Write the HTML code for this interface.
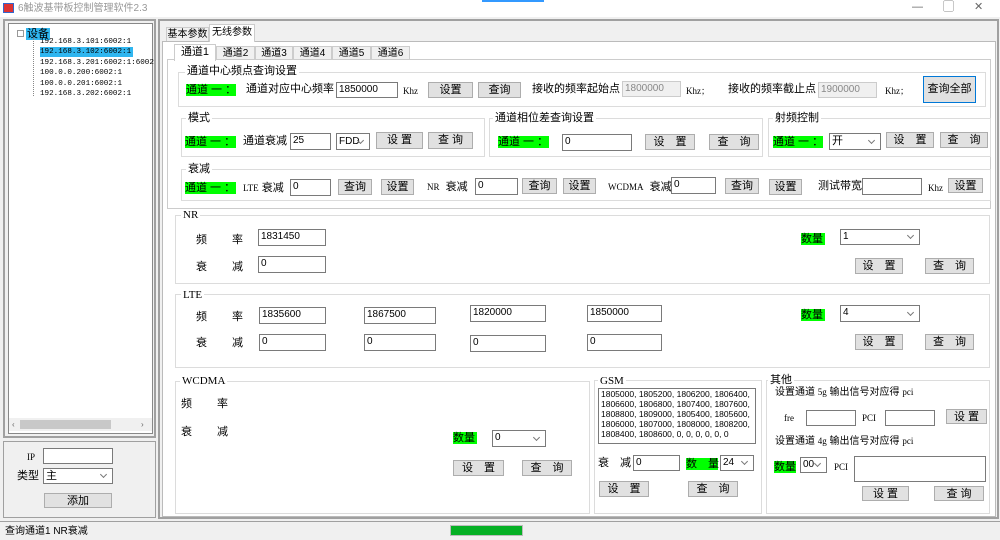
<!DOCTYPE html>
<html><head><meta charset="utf-8"><style>
*{box-sizing:border-box;margin:0;padding:0}
body{width:1000px;height:540px;background:#f0f0f0;position:relative;overflow:hidden;font-family:"Liberation Sans","Noto Sans CJK SC",sans-serif;font-size:11px;color:#000}
.a{position:absolute;white-space:nowrap}
.t{position:absolute;white-space:nowrap;font-size:11px;line-height:13px}
.s{font-family:"Liberation Serif","Noto Serif CJK SC",serif;font-size:9px}
.m{font-family:"Liberation Mono",monospace;font-size:7.6px}
.g{position:absolute;background:#00ff00;height:12px;line-height:12px;font-size:11px;white-space:nowrap}
.b{position:absolute;background:#e1e1e1;border:1px solid #adadad;text-align:center;font-size:11px;line-height:14px;white-space:nowrap}
.i{position:absolute;background:#fff;border:1px solid #7a7a7a;font-size:10px;line-height:14px;padding-left:2px;white-space:nowrap;font-family:"Liberation Sans Narrow","Liberation Sans",sans-serif}
.d{background:#f0f0f0;border-color:#ccc;color:#888}
.sel:after{content:"";position:absolute;right:6px;top:50%;margin-top:-4px;width:4px;height:4px;border-right:1px solid #777;border-bottom:1px solid #777;transform:rotate(45deg)}
.gb{position:absolute;border:1px solid #dcdcdc}
.gl{position:absolute;background:#fff;padding:0 2px;font-size:11px;line-height:12px;white-space:nowrap}
</style></head><body>
<div class="a" style="left:0;top:0;width:1000px;height:17px;background:#fff"></div>
<div class="a" style="left:3px;top:3px;width:11px;height:10px;background:#d33;border:1px solid #36c"></div>
<div class="t" style="left:18px;top:2px;color:#999;font-size:10px">6触波基带板控制管理软件2.3</div>
<div class="a" style="left:482px;top:0;width:62px;height:2px;background:#39f"></div>
<div class="t" style="left:912px;top:1px;color:#666">—</div>
<div class="t" style="left:943px;top:1px;color:#666">▢</div>
<div class="t" style="left:974px;top:1px;color:#666">✕</div>
<div class="a" style="left:3px;top:19px;width:153px;height:419px;border:2px solid #a0a0a0"></div>
<div class="a" style="left:8px;top:23px;width:145px;height:411px;background:#fff;border:1px solid #888"></div>
<div class="a" style="left:17px;top:30px;width:7px;height:7px;border:1px solid #999"></div>
<div class="g" style="left:26px;top:28px;background:#2fb6f0;padding:0 1px">设备</div>
<div class="a" style="left:33px;top:38px;width:1px;height:58px;border-left:1px dotted #888"></div>
<div class="a m" style="left:40px;top:37px;line-height:10px">192.168.3.101:6002:1</div>
<div class="a m" style="left:40px;top:47px;line-height:10px;background:#2fb6f0;padding-right:2px">192.168.3.102:6002:1</div>
<div class="a m" style="left:40px;top:58px;line-height:10px">192.168.3.201:6002:1:6002</div>
<div class="a m" style="left:40px;top:68px;line-height:10px">100.0.0.200:6002:1</div>
<div class="a m" style="left:40px;top:79px;line-height:10px">100.0.0.201:6002:1</div>
<div class="a m" style="left:40px;top:89px;line-height:10px">192.168.3.202:6002:1</div>
<div class="a" style="left:9px;top:418px;width:143px;height:13px;background:#f0f0f0"></div>
<div class="a" style="left:20px;top:420px;width:91px;height:9px;background:#c8c8c8"></div>
<div class="t" style="left:12px;top:418px;font-size:8px;color:#666">‹</div>
<div class="t" style="left:141px;top:418px;font-size:8px;color:#666">›</div>
<div class="a" style="left:3px;top:441px;width:153px;height:77px;border:1px solid #a0a0a0"></div>
<div class="t s" style="left:27px;top:451px">IP</div>
<div class="i" style="left:43px;top:448px;width:70px;height:16px"></div>
<div class="t" style="left:17px;top:470px">类型</div>
<div class="i sel" style="left:43px;top:468px;width:70px;height:16px;font-size:11px">主</div>
<div class="b" style="left:44px;top:493px;width:68px;height:15px">添加</div>
<div class="a" style="left:158px;top:19px;width:841px;height:500px;border:2px solid #a0a0a0"></div>
<div class="a" style="left:162px;top:41px;width:834px;height:476px;background:#fff;border:1px solid #bbb"></div>
<div class="a" style="left:166px;top:27px;width:43px;height:14px;border:1px solid #ccc;border-bottom:none;font-size:10px;text-align:center;line-height:13px">基本参数</div>
<div class="a" style="left:209px;top:24px;width:46px;height:18px;background:#fff;border:1px solid #ccc;border-bottom:none;font-size:10px;text-align:center;line-height:16px">无线参数</div>
<div class="a" style="left:167px;top:59px;width:824px;height:150px;border:1px solid #ccc"></div>
<div class="a" style="left:216px;top:46px;width:39px;height:14px;border:1px solid #ccc;background:#f0f0f0;font-size:10px;text-align:center;line-height:13px">通道2</div>
<div class="a" style="left:255px;top:46px;width:38px;height:14px;border:1px solid #ccc;background:#f0f0f0;font-size:10px;text-align:center;line-height:13px">通道3</div>
<div class="a" style="left:293px;top:46px;width:39px;height:14px;border:1px solid #ccc;background:#f0f0f0;font-size:10px;text-align:center;line-height:13px">通道4</div>
<div class="a" style="left:332px;top:46px;width:39px;height:14px;border:1px solid #ccc;background:#f0f0f0;font-size:10px;text-align:center;line-height:13px">通道5</div>
<div class="a" style="left:371px;top:46px;width:39px;height:14px;border:1px solid #ccc;background:#f0f0f0;font-size:10px;text-align:center;line-height:13px">通道6</div>
<div class="a" style="left:174px;top:44px;width:42px;height:17px;border:1px solid #ccc;border-bottom:none;background:#fff;font-size:11px;text-align:center;line-height:15px">通道1</div>
<div class="gb" style="left:178px;top:72px;width:808px;height:35px"></div>
<div class="gl" style="left:185px;top:65px">通道中心频点查询设置</div>
<div class="g" style="left:186px;top:84px;width:50px">通道 一 ：</div>
<div class="t" style="left:246px;top:83px">通道对应中心频率</div>
<div class="i" style="left:336px;top:82px;width:62px;height:16px">1850000</div>
<div class="t s" style="left:403px;top:85px">Khz</div>
<div class="b" style="left:428px;top:82px;width:45px;height:16px">设置</div>
<div class="b" style="left:478px;top:82px;width:43px;height:16px">查询</div>
<div class="t" style="left:532px;top:83px">接收的频率起始点</div>
<div class="i d" style="left:622px;top:81px;width:59px;height:16px">1800000</div>
<div class="t s" style="left:686px;top:85px">Khz；</div>
<div class="t" style="left:728px;top:83px">接收的频率截止点</div>
<div class="i d" style="left:818px;top:82px;width:59px;height:16px">1900000</div>
<div class="t s" style="left:885px;top:85px">Khz；</div>
<div class="b" style="left:923px;top:76px;width:53px;height:27px;border:1px solid #0078d7;line-height:25px">查询全部</div>
<div class="gb" style="left:181px;top:118px;width:304px;height:39px"></div>
<div class="gl" style="left:186px;top:112px">模式</div>
<div class="g" style="left:185px;top:136px;width:51px">通道 一 ：</div>
<div class="t" style="left:243px;top:135px">通道衰减</div>
<div class="i" style="left:290px;top:133px;width:41px;height:17px">25</div>
<div class="i sel s" style="left:336px;top:133px;width:34px;height:17px;line-height:15px">FDD</div>
<div class="b" style="left:376px;top:132px;width:47px;height:17px">设 置</div>
<div class="b" style="left:428px;top:132px;width:45px;height:17px">查 询</div>
<div class="gb" style="left:489px;top:118px;width:274px;height:39px"></div>
<div class="gl" style="left:493px;top:112px">通道相位差查询设置</div>
<div class="g" style="left:498px;top:136px;width:51px">通道 一 ：</div>
<div class="i" style="left:562px;top:134px;width:70px;height:17px">0</div>
<div class="b" style="left:645px;top:134px;width:50px;height:16px">设　置</div>
<div class="b" style="left:709px;top:134px;width:50px;height:16px">查　询</div>
<div class="gb" style="left:768px;top:118px;width:223px;height:39px"></div>
<div class="gl" style="left:773px;top:112px">射频控制</div>
<div class="g" style="left:773px;top:136px;width:50px">通道 一 ：</div>
<div class="i sel" style="left:829px;top:133px;width:52px;height:17px;font-size:11px">开</div>
<div class="b" style="left:886px;top:132px;width:48px;height:16px">设　置</div>
<div class="b" style="left:940px;top:132px;width:48px;height:16px">查　询</div>
<div class="gb" style="left:181px;top:169px;width:810px;height:32px"></div>
<div class="gl" style="left:186px;top:163px">衰减</div>
<div class="g" style="left:185px;top:182px;width:51px">通道 一 ：</div>
<div class="t" style="left:243px;top:182px"><span class="s">LTE</span> 衰减</div>
<div class="i" style="left:290px;top:179px;width:41px;height:17px">0</div>
<div class="b" style="left:338px;top:179px;width:34px;height:16px">查询</div>
<div class="b" style="left:381px;top:179px;width:33px;height:16px">设置</div>
<div class="t" style="left:427px;top:181px"><span class="s">NR</span>&nbsp; 衰减</div>
<div class="i" style="left:475px;top:178px;width:43px;height:17px">0</div>
<div class="b" style="left:522px;top:178px;width:35px;height:16px">查询</div>
<div class="b" style="left:563px;top:178px;width:33px;height:16px">设置</div>
<div class="t" style="left:608px;top:181px"><span class="s">WCDMA</span>&nbsp; 衰减</div>
<div class="i" style="left:671px;top:177px;width:45px;height:17px">0</div>
<div class="b" style="left:725px;top:178px;width:34px;height:16px">查询</div>
<div class="b" style="left:769px;top:179px;width:33px;height:16px">设置</div>
<div class="t" style="left:818px;top:180px">测试带宽</div>
<div class="i" style="left:862px;top:178px;width:60px;height:17px"></div>
<div class="t s" style="left:928px;top:182px">Khz</div>
<div class="b" style="left:948px;top:178px;width:35px;height:15px">设置</div>
<div class="gb" style="left:175px;top:215px;width:815px;height:69px"></div>
<div class="gl s" style="left:181px;top:209px">NR</div>
<div class="t" style="left:196px;top:234px">频</div><div class="t" style="left:232px;top:234px">率</div>
<div class="i" style="left:258px;top:229px;width:68px;height:17px">1831450</div>
<div class="t" style="left:196px;top:261px">衰</div><div class="t" style="left:232px;top:261px">减</div>
<div class="i" style="left:258px;top:256px;width:68px;height:17px">0</div>
<div class="g" style="left:801px;top:233px;width:24px">数量</div>
<div class="i sel" style="left:840px;top:229px;width:80px;height:16px">1</div>
<div class="b" style="left:855px;top:258px;width:48px;height:16px">设　置</div>
<div class="b" style="left:925px;top:258px;width:49px;height:16px">查　询</div>
<div class="gb" style="left:175px;top:294px;width:815px;height:74px"></div>
<div class="gl s" style="left:181px;top:289px">LTE</div>
<div class="t" style="left:196px;top:311px">频</div><div class="t" style="left:232px;top:311px">率</div>
<div class="t" style="left:196px;top:337px">衰</div><div class="t" style="left:232px;top:337px">减</div>
<div class="i" style="left:259px;top:307px;width:67px;height:17px">1835600</div>
<div class="i" style="left:364px;top:307px;width:72px;height:17px">1867500</div>
<div class="i" style="left:470px;top:305px;width:76px;height:17px">1820000</div>
<div class="i" style="left:587px;top:305px;width:75px;height:17px">1850000</div>
<div class="i" style="left:259px;top:334px;width:67px;height:17px">0</div>
<div class="i" style="left:364px;top:334px;width:72px;height:17px">0</div>
<div class="i" style="left:470px;top:335px;width:76px;height:17px">0</div>
<div class="i" style="left:587px;top:334px;width:75px;height:17px">0</div>
<div class="g" style="left:801px;top:309px;width:24px">数量</div>
<div class="i sel" style="left:840px;top:305px;width:80px;height:17px">4</div>
<div class="b" style="left:855px;top:334px;width:48px;height:16px">设　置</div>
<div class="b" style="left:925px;top:334px;width:49px;height:16px">查　询</div>
<div class="gb" style="left:175px;top:381px;width:415px;height:133px"></div>
<div class="gl s" style="left:180px;top:375px">WCDMA</div>
<div class="t" style="left:181px;top:398px">频</div><div class="t" style="left:217px;top:398px">率</div>
<div class="t" style="left:181px;top:426px">衰</div><div class="t" style="left:217px;top:426px">减</div>
<div class="g" style="left:453px;top:432px;width:24px">数量</div>
<div class="i sel" style="left:492px;top:430px;width:54px;height:17px">0</div>
<div class="b" style="left:453px;top:460px;width:51px;height:16px">设　置</div>
<div class="b" style="left:522px;top:460px;width:50px;height:16px">查　询</div>
<div class="gb" style="left:594px;top:380px;width:168px;height:134px"></div>
<div class="gl s" style="left:598px;top:375px">GSM</div>
<div class="i" style="left:598px;top:388px;width:158px;height:56px;white-space:normal;font-size:8.5px;line-height:10px;word-break:break-all">1805000, 1805200, 1806200, 1806400, 1806600, 1806800, 1807400, 1807600, 1808800, 1809000, 1805400, 1805600, 1806000, 1807000, 1808000, 1808200, 1808400, 1808600, 0, 0, 0, 0, 0, 0</div>
<div class="t" style="left:598px;top:457px">衰　减</div>
<div class="i" style="left:633px;top:455px;width:47px;height:16px">0</div>
<div class="g" style="left:686px;top:458px;width:32px">数　量</div>
<div class="i sel" style="left:720px;top:455px;width:34px;height:16px">24</div>
<div class="b" style="left:599px;top:481px;width:50px;height:16px">设　置</div>
<div class="b" style="left:688px;top:481px;width:50px;height:16px">查　询</div>
<div class="gb" style="left:766px;top:380px;width:224px;height:134px"></div>
<div class="gl" style="left:768px;top:374px">其他</div>
<div class="t" style="left:775px;top:386px;font-size:10px">设置通道 <span class="s">5g</span> 输出信号对应得 <span class="s">pci</span></div>
<div class="t s" style="left:784px;top:412px">fre</div>
<div class="i" style="left:806px;top:410px;width:50px;height:16px"></div>
<div class="t s" style="left:862px;top:412px">PCI</div>
<div class="i" style="left:885px;top:410px;width:50px;height:16px"></div>
<div class="b" style="left:946px;top:409px;width:41px;height:15px">设 置</div>
<div class="t" style="left:775px;top:435px;font-size:10px">设置通道 <span class="s">4g</span> 输出信号对应得 <span class="s">pci</span></div>
<div class="g" style="left:774px;top:461px;width:22px">数量</div>
<div class="i sel" style="left:800px;top:457px;width:27px;height:16px">00</div>
<div class="t s" style="left:834px;top:461px">PCI</div>
<div class="i" style="left:854px;top:456px;width:132px;height:26px"></div>
<div class="b" style="left:862px;top:486px;width:47px;height:15px">设 置</div>
<div class="b" style="left:934px;top:486px;width:50px;height:15px">查 询</div>
<div class="a" style="left:0;top:521px;width:1000px;height:19px;border-top:1px solid #a0a0a0;background:#f0f0f0"></div>
<div class="t" style="left:5px;top:525px;font-size:10px">查询通道1 NR衰减</div>
<div class="a" style="left:450px;top:525px;width:73px;height:11px;background:#06b025;border:1px solid #bcbcbc"></div>
</body></html>
